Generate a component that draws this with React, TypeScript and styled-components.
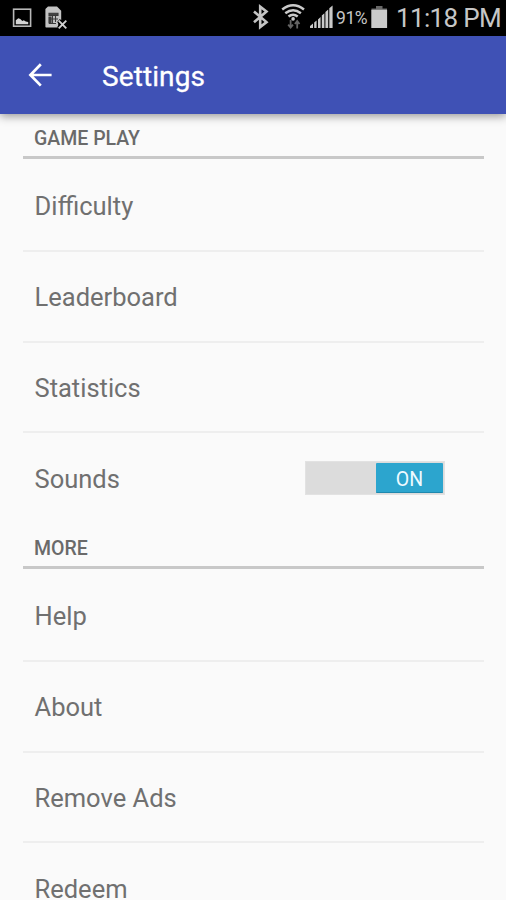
import React from "react";
import styled, { createGlobalStyle } from "styled-components";

const GlobalStyle = createGlobalStyle`
  html, body { margin: 0; padding: 0; background: #fafafa; overflow: hidden; }
  * { box-sizing: border-box; }
`;

const Screen = styled.div`
  width: 506px;
  height: 900px;
  overflow: hidden;
  display: flex;
  flex-direction: column;
  background: #fafafa;
  font-family: Roboto, "Liberation Sans", sans-serif;
`;

const StatusBar = styled.div`
  flex: none;
  height: 36px;
  background: #000;
  color: #c6c6c6;
  display: flex;
  align-items: flex-start;
  padding: 0 4px 0 12px;
  white-space: nowrap;
`;

const StatusIcon = styled.svg<{ $gap?: number }>`
  flex: none;
  display: block;
  margin-left: ${(p) => p.$gap ?? 0}px;
`;

const Spacer = styled.div`
  flex: 1;
`;

const BatteryLevel = styled.span`
  width: 35px;
  padding-left: 3px;
  font-size: 17.5px;
  line-height: 37px;
  letter-spacing: -0.4px;
`;

const Clock = styled.span`
  width: 107px;
  padding-left: 1px;
  font-size: 26px;
  line-height: 36px;
  letter-spacing: -0.65px;
`;

const Toolbar = styled.header`
  flex: none;
  position: relative;
  height: 78px;
  background: #3f51b5;
  color: #fff;
  display: flex;
  align-items: center;
  padding-left: 28px;
  box-shadow: 0 2px 9px rgba(0, 0, 0, 0.42);
`;

const BackIcon = styled.svg`
  display: block;
  margin-right: 50px;
`;

const Title = styled.h1`
  margin: 0;
  font-size: 28px;
  font-weight: 400;
  line-height: 36px;
  letter-spacing: 0.1px;
  padding-top: 3px;
  -webkit-text-stroke: 0.3px #fff;
`;

const List = styled.main`
  padding: 0 22px 0 23px;
`;

const SectionHeader = styled.h2`
  margin: 0;
  height: 45px;
  padding: 13px 0 0 11px;
  border-bottom: 3px solid #c8c8c8;
  color: #6a6a6a;
  font-size: 19.5px;
  font-weight: 500;
  line-height: 24px;
`;

const Row = styled.div<{ $first?: boolean; $last?: boolean; $short?: boolean }>`
  height: ${(p) => (p.$first ? 93 : p.$short ? 90 : 91)}px;
  padding: ${(p) => (p.$first ? 3 : p.$short ? 2 : p.$last ? 0 : 1)}px 39px 0 11.5px;
  border-bottom: ${(p) => (p.$last ? "0" : "2px solid #eeeeee")};
  display: flex;
  align-items: center;
  justify-content: space-between;
`;

const Label = styled.span`
  color: #707070;
  font-size: 25.5px;
  line-height: 32px;
`;

const Track = styled.div`
  width: 140px;
  height: 34px;
  margin-top: -1px;
  padding: 1px 1px 1px 0;
  background: #dcdcdc;
  border: 1px solid #e2e2e2;
  display: flex;
  justify-content: flex-end;
`;

const Thumb = styled.div`
  width: 67px;
  height: 30px;
  border-radius: 1px;
  border-bottom: 1px solid #1f88ae;
  background: #2ca5ce;
  color: #eefaff;
  font-size: 19.5px;
  line-height: 33px;
  text-align: center;
`;

type Entry = { label: string; on?: boolean };

const sections: { title: string; entries: Entry[] }[] = [
  {
    title: "GAME PLAY",
    entries: [
      { label: "Difficulty" },
      { label: "Leaderboard" },
      { label: "Statistics" },
      { label: "Sounds", on: true },
    ],
  },
  {
    title: "MORE",
    entries: [
      { label: "Help" },
      { label: "About" },
      { label: "Remove Ads" },
      { label: "Redeem" },
    ],
  },
];

function StatusIcons() {
  return (
    <StatusBar>
      <StatusIcon width="20" height="36" viewBox="12 0 20 36">
        <rect x="13.6" y="9.2" width="17" height="17" fill="none" stroke="#b8b8b8" strokeWidth="1.6" />
        <path d="M15.8 24.2v-4l2.5-2 2 .8 2 2 1.5-.7 2 1.2 2.4.4v2.3z" fill="#d4d4d4" />
      </StatusIcon>
      <StatusIcon $gap={12} width="24" height="36" viewBox="44 0 24 36">
        <path d="M48 6.5h9l4.2 4.2V20l-3 1v6.5H46.2a.8.8 0 0 1-.8-.8V9z" fill="#c4c4c4" />
        <path d="M49 13.2h9v2.3h-9zM49 17h2v6h-2zM52.5 15v9M55.5 15v7M49 19h9M49 23.5h7" fill="#444" stroke="#3a3a3a" strokeWidth="1.1" />
        <path d="M58.5 20.5l8 8M66.5 20.5l-8 8" stroke="#000" strokeWidth="4" />
        <path d="M58.7 20.7l7.6 7.6M66.3 20.7l-7.6 7.6" stroke="#d0d0d0" strokeWidth="1.9" />
      </StatusIcon>
      <Spacer />
      <StatusIcon width="18" height="36" viewBox="252 0 18 36">
        <path d="M254 11.5l12.5 10.6-6.3 5V6.6l6.3 4.9L254 22.3" fill="none" stroke="#c4c4c4" strokeWidth="2.6" />
      </StatusIcon>
      <StatusIcon $gap={10} width="26" height="36" viewBox="280 0 26 36">
        <g fill="none" stroke="#cacaca" strokeWidth="2.5">
          <path d="M282.2 9.4q10.9-8.4 21.8 0" />
          <path d="M285.3 13.2q7.8-6 15.6 0" />
          <path d="M288.5 16.6q4.6-3.6 9.2 0" />
        </g>
        <circle cx="293.1" cy="18.9" r="1.8" fill="#cacaca" />
        <path d="M290.6 20v7M288.2 24.6l2.4 3 2.4-3M297.2 28.5v-7M294.9 24l2.3-3 2.3 3" fill="none" stroke="#656565" strokeWidth="1.8" />
      </StatusIcon>
      <StatusIcon $gap={3} width="24" height="36" viewBox="309 0 24 36">
        <path d="M310 28v-2l3-2.5V28zM314.2 28v-5.4l2.4-2V28zM318 28v-8.6l2.6-2.4v11zM321.8 28V15.6l2.6-2.4V28zM325.4 28V12l2.8-2.6V28zM329.3 28V8.2l3.3-2.7V28z" fill="#c9c9c9" />
      </StatusIcon>
      <BatteryLevel>91%</BatteryLevel>
      <StatusIcon $gap={2} width="18" height="36" viewBox="370 0 18 36">
        <path d="M376 6h6.5v2.5H387v2h-15.5v-2H376z" fill="#686868" />
        <rect x="371.3" y="9.8" width="15.8" height="18.2" fill="#cacaca" />
      </StatusIcon>
      <StatusIcon width="7" height="36" />
      <Clock>11:18 PM</Clock>
    </StatusBar>
  );
}

function ToggleSwitch() {
  return (
    <Track role="switch" aria-checked="true">
      <Thumb>ON</Thumb>
    </Track>
  );
}

export default function App() {
  return (
    <Screen>
      <GlobalStyle />
      <StatusIcons />
      <Toolbar>
        <BackIcon width="24" height="24" viewBox="0 0 24 24">
          <path d="M12.8 1.2L2.4 12l10.4 10.6M2.4 12H23.6" fill="none" stroke="#fff" strokeWidth="2.7" />
        </BackIcon>
        <Title>Settings</Title>
      </Toolbar>
      <List>
        {sections.map((section) => (
          <section key={section.title}>
            <SectionHeader>{section.title}</SectionHeader>
            {section.entries.map((e, i) => (
              <Row
                key={e.label}
                $first={i === 0}
                $short={i === section.entries.length - 2}
                $last={i === section.entries.length - 1}
              >
                <Label>{e.label}</Label>
                {e.on && <ToggleSwitch />}
              </Row>
            ))}
          </section>
        ))}
      </List>
    </Screen>
  );
}
